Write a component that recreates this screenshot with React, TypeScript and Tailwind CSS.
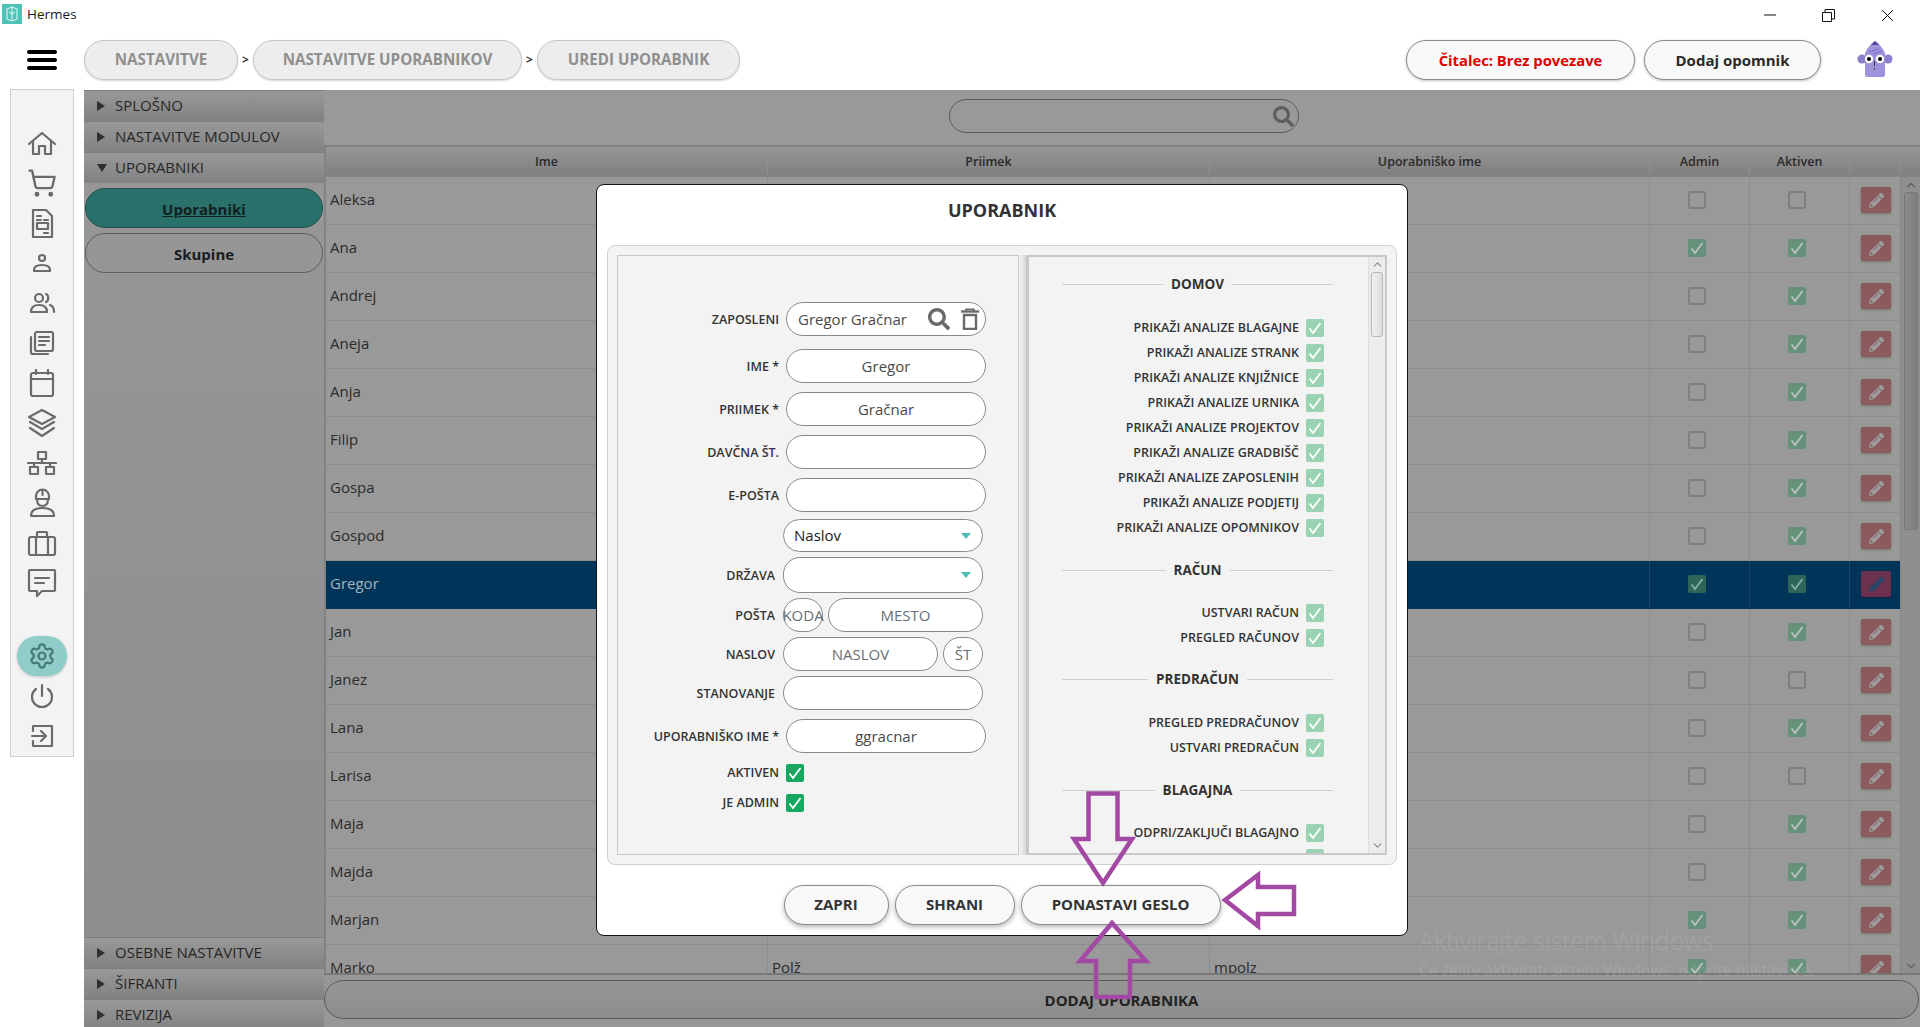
import React from "react";
import { ChevronUp, ChevronDown, ShoppingCart, Settings } from "lucide-react";
import { FaPencilAlt, FaSearch } from "react-icons/fa";

const S = { fontFamily: '"Open Sans", sans-serif' };

function Ico({ w, h, children }: { w: number; h: number; children: React.ReactNode }) {
  return (
    <svg width={w} height={h} viewBox={`0 0 ${w} ${h}`} fill="none" stroke="#6b6b6b" strokeWidth="2.2" strokeLinejoin="round" strokeLinecap="round">
      {children}
    </svg>
  );
}

const navIcons: React.ReactNode[] = [
  <Ico w={30} h={25} key="home"><path d="M2 13 15 2l13 11" /><path d="M6 10v13h6v-8h6v8h6V10" /></Ico>,
  <ShoppingCart key="cart" size={30} color="#6b6b6b" strokeWidth={1.9} />,
  <Ico w={23} h={31} key="doc"><path d="M2 2h13l6 6v21H2z" /><path d="M6 8h4M6 12h4M13 12h4" /><rect x="6" y="15" width="11" height="6" /><path d="M13 25h4" /></Ico>,
  <Ico w={20} h={20} key="user"><circle cx="10" cy="5" r="3" /><path d="M2 17c0-4 4-5 8-5s8 1 8 5v1H2z" /></Ico>,
  <Ico w={27} h={22} key="users"><circle cx="10" cy="6" r="4" /><path d="M2 20c0-5 3-7 8-7s8 2 8 7z" /><path d="M17 2c3 1 3 7 0 8M21 13c3 1 4 3 4 7" /></Ico>,
  <Ico w={26} h={26} key="news"><rect x="6" y="2" width="18" height="19" rx="2" /><path d="M2 7v15a2 2 0 0 0 2 2h15M10 7h10M10 11h10M10 15h6" /></Ico>,
  <Ico w={26} h={29} key="cal"><rect x="2" y="4" width="22" height="23" rx="2" /><path d="M2 10h22M7 1v4M19 1v4" /></Ico>,
  <Ico w={30} h={30} key="layers"><path d="m15 2 13 7-13 7-13-7z" /><path d="m3 14 12 7 12-7" /><path d="m3 20 12 8 12-8" /></Ico>,
  <Ico w={30} h={26} key="net"><rect x="11" y="2" width="8" height="7" /><rect x="3" y="17" width="8" height="7" /><rect x="19" y="17" width="8" height="7" /><path d="M15 9v4M1 13h28M7 13v4M23 13v4" /></Ico>,
  <Ico w={27} h={30} key="worker"><path d="M7 11V8a6.500 6.500 0 0 1 13 0v3z" /><path d="M13.500 2v5M8 11c0 5 2 7 5.500 7S19 16 19 11" /><path d="M2 28c0-6 5-8 11.500-8S25 22 25 28z" /></Ico>,
  <Ico w={30} h={27} key="case"><rect x="2" y="7" width="26" height="18" rx="2" /><path d="M10 7V3a1 1 0 0 1 1-1h8a1 1 0 0 1 1 1v4M9 7v18M21 7v18" /></Ico>,
  <Ico w={30} h={30} key="msg"><path d="M3 2h24a1 1 0 0 1 1 1v19a1 1 0 0 1-1 1H15l-5 5v-5H3a1 1 0 0 1-1-1V3a1 1 0 0 1 1-1z" /><path d="M8 10h14M8 15h9" /></Ico>,
];

function Check({ color = "#ffffff" }: { color?: string }) {
  return (
    <svg width="14" height="14" viewBox="0 0 14 14" fill="none" stroke={color} strokeWidth="1.8">
      <path d="m1.500 7.500 3.500 4.500 7.500-10" />
    </svg>
  );
}

function Crumb({ w, children }: { w: string; children: React.ReactNode }) {
  return (
    <div className={`flex h-[40px] items-center justify-center rounded-[20px] border border-[#c6c6c6] bg-[#ededed] pb-[2px] text-[15.200px] font-bold text-[#8f8f8f] shadow-[0_1px_2px_rgba(0,0,0,0.15)] ${w}`}>
      {children}
    </div>
  );
}

function Sep() {
  return <div className="w-[15px] text-center text-[12px] font-bold text-[#333]">&gt;</div>;
}

function AccHead({ open, children }: { open?: boolean; children: React.ReactNode }) {
  return (
    <div className="flex h-[31px] shrink-0 items-center border-t border-b border-t-[#7d7d7d] border-b-[#858585] bg-linear-to-b from-[#999999] to-[#828282] pl-[13px] text-[15px] text-[#262626]">
      {open ? (
        <span className="mr-[8px] h-0 w-0 border-x-[5px] border-t-[8px] border-x-transparent border-t-[#2f2f2f]" />
      ) : (
        <span className="mr-[10px] h-0 w-0 border-y-[5px] border-l-[8px] border-y-transparent border-l-[#2f2f2f]" />
      )}
      {children}
    </div>
  );
}

type R = { n: string; a: boolean; k: boolean; p?: string; u?: string };
const rows: R[] = [
  { n: "Aleksa", a: false, k: false },
  { n: "Ana", a: true, k: true },
  { n: "Andrej", a: false, k: true },
  { n: "Aneja", a: false, k: true },
  { n: "Anja", a: false, k: true },
  { n: "Filip", a: false, k: true },
  { n: "Gospa", a: false, k: true },
  { n: "Gospod", a: false, k: true },
  { n: "Gregor", a: true, k: true },
  { n: "Jan", a: false, k: true },
  { n: "Janez", a: false, k: false },
  { n: "Lana", a: false, k: true },
  { n: "Larisa", a: false, k: false },
  { n: "Maja", a: false, k: true },
  { n: "Majda", a: false, k: true },
  { n: "Marjan", a: true, k: true },
  { n: "Marko", a: true, k: true, p: "Polž", u: "mpolz" },
];

function TableCheck({ on, sel }: { on: boolean; sel: boolean }) {
  if (on) {
    return (
      <div className={`flex h-[18px] w-[18px] items-center justify-center rounded-[2px] ${sel ? "bg-[#2d6659]" : "bg-[#66917b]"}`}>
        <Check color={sel ? "#86aca6" : "#bcc4c0"} />
      </div>
    );
  }
  return <div className="h-[18px] w-[18px] rounded-[3px] border-2 border-[#7f7f7f]" />;
}

function Row({ r }: { r: R }) {
  const sel = r.n === "Gregor";
  const line = sel ? "border-[#1a4468]" : "border-[#8d8d8d]";
  return (
    <div className={`flex h-[48px] shrink-0 border-b ${sel ? "border-b-[#003459] bg-[#003459] text-[#a9b4bc]" : "border-b-[#8d8d8d] text-[#2b2b2b]"} text-[15px]`}>
      <div className={`flex w-[442px] items-center border-r pb-[2px] pl-[4px] ${line}`}>{r.n}</div>
      <div className={`flex w-[442px] items-center border-r pb-[2px] pl-[4px] ${line}`}>{r.p}</div>
      <div className={`flex w-[440px] items-center border-r pb-[2px] pl-[4px] ${line}`}>{r.u}</div>
      <div className={`w-[100px] border-r pl-[38px] pt-[14px] ${line}`}>
        <TableCheck on={r.a} sel={sel} />
      </div>
      <div className={`w-[100px] border-r pl-[38px] pt-[14px] ${line}`}>
        <TableCheck on={r.k} sel={sel} />
      </div>
      <div className="w-[50px] pl-[11px] pt-[10px]">
        <div className={`flex h-[26px] w-[30px] items-center justify-center rounded-[2px] shadow-[0_1px_3px_rgba(0,0,0,0.25)] ${sel ? "bg-[#6d3150]" : "bg-[#8c5a5c]"}`}>
          <FaPencilAlt size={15} color={sel ? "#1f4a70" : "#a0a0a0"} />
        </div>
      </div>
    </div>
  );
}

function Field({ children, center, className = "" }: { children?: React.ReactNode; center?: boolean; className?: string }) {
  return (
    <div className={`flex items-center rounded-[17px] border border-[#8a8a8a] bg-white text-[15px] text-[#4a4a4a] ${center ? "justify-center" : ""} ${className}`}>
      {children}
    </div>
  );
}

function Caret() {
  return <span className="absolute right-[11px] top-1/2 h-0 w-0 -translate-y-1/2 border-x-[5px] border-t-[6px] border-x-transparent border-t-[#4cbfb5]" />;
}

function FormGroupA({ label, top, flat, children }: { label: string; top: string; flat?: boolean; children?: React.ReactNode }) {
  return (
    <div className={`flex items-center ${top}`}>
      <div className={`w-[161px] text-right text-[12.500px] leading-[18px] font-semibold text-[#333] ${flat ? "" : "translate-y-px"}`}>{label}</div>
      <div className="ml-[7px] w-[200px]">{children}</div>
    </div>
  );
}

function FormGroupB({ label, top, children }: { label?: string; top: string; children?: React.ReactNode }) {
  return (
    <div className={`flex items-center ${top}`}>
      <div className="w-[157px] translate-y-px text-right text-[12.500px] leading-[18px] font-semibold text-[#333]">{label}</div>
      <div className="ml-[8px] flex w-[200px] gap-[5px]">{children}</div>
    </div>
  );
}

function Perm({ label }: { label: string }) {
  return (
    <div className="flex h-[18px] w-[295px] shrink-0 items-center justify-end gap-[7px] text-[12.500px] font-semibold text-[#333]">
      <span>{label}</span>
      <div className="flex h-[18px] w-[18px] items-center justify-center rounded-[2px] bg-[#9ad2b4]">
        <Check />
      </div>
    </div>
  );
}

const sections: { t: string; cls: string; items: string[] }[] = [
  {
    t: "DOMOV",
    cls: "mt-[17px] mb-[25px]",
    items: [
      "PRIKAŽI ANALIZE BLAGAJNE",
      "PRIKAŽI ANALIZE STRANK",
      "PRIKAŽI ANALIZE KNJIŽNICE",
      "PRIKAŽI ANALIZE URNIKA",
      "PRIKAŽI ANALIZE PROJEKTOV",
      "PRIKAŽI ANALIZE GRADBIŠČ",
      "PRIKAŽI ANALIZE ZAPOSLENIH",
      "PRIKAŽI ANALIZE PODJETIJ",
      "PRIKAŽI ANALIZE OPOMNIKOV",
    ],
  },
  { t: "RAČUN", cls: "mt-[23px] mb-[24px]", items: ["USTVARI RAČUN", "PREGLED RAČUNOV"] },
  { t: "PREDRAČUN", cls: "mt-[22px] mb-[25px]", items: ["PREGLED PREDRAČUNOV", "USTVARI PREDRAČUN"] },
  { t: "BLAGAJNA", cls: "mt-[23px] mb-[24px]", items: ["ODPRI/ZAKLJUČI BLAGAJNO", ""] },
];

function DlgButton({ w, children }: { w: string; children: React.ReactNode }) {
  return (
    <div className={`flex h-[40px] items-center justify-center rounded-[20px] border border-[#8c8c8c] bg-[#f8f8f8] pb-[1px] text-[15px] font-bold text-[#333] shadow-[0_2px_5px_rgba(0,0,0,0.3)] ${w}`}>
      {children}
    </div>
  );
}

function Dialog() {
  return (
    <div className="absolute left-[596px] top-[184px] flex h-[752px] w-[812px] flex-col rounded-[8px] border border-[#111] bg-white">
      <div className="h-[60px] pt-[14px] text-center text-[18px] leading-[22px] font-bold text-[#333]">UPORABNIK</div>
      <div className="ml-[10px] flex h-[620px] w-[790px] rounded-[8px] border border-[#d0d0d0] bg-[#f3f3f3] p-[9px]">
        <div className="h-full w-[402px] border border-[#c8c8c8] pt-[46px]">
          <FormGroupA label="ZAPOSLENI" top="">
            <Field className="h-[34px] justify-between pl-[11px] pr-[6px]">
              <span>Gregor Gračnar</span>
              <span className="flex items-center gap-[11px]">
                <FaSearch size={22} color="#6a6a6a" />
                <svg width="18" height="22" viewBox="0 0 18 22" fill="none" stroke="#6a6a6a" strokeWidth="2.4">
                  <path d="M0 3.500h18" />
                  <path d="M5 3V1.200h8V3" strokeWidth="1.600" />
                  <path d="M3 7h12v14H3z" />
                </svg>
              </span>
            </Field>
          </FormGroupA>
          <FormGroupA label="IME *" top="mt-[13px]">
            <Field center className="h-[34px]">Gregor</Field>
          </FormGroupA>
          <FormGroupA label="PRIIMEK *" top="mt-[9px]">
            <Field center className="h-[34px]">Gračnar</Field>
          </FormGroupA>
          <FormGroupA label="DAVČNA ŠT." top="mt-[9px]">
            <Field className="h-[34px]" />
          </FormGroupA>
          <FormGroupA label="E-POŠTA" top="mt-[9px]">
            <Field className="h-[34px]" />
          </FormGroupA>
          <FormGroupB top="mt-[7px]">
            <Field className="relative h-[33px] w-full pl-[10px] text-[#222]">
              Naslov
              <Caret />
            </Field>
          </FormGroupB>
          <FormGroupB label="DRŽAVA" top="mt-[5px]">
            <Field className="relative h-[36px] w-full">
              <Caret />
            </Field>
          </FormGroupB>
          <FormGroupB label="POŠTA" top="mt-[5px]">
            <Field center className="h-[34px] w-[40px] shrink-0 text-[#666e74]">KODA</Field>
            <Field center className="h-[34px] w-[155px] text-[#666e74]">MESTO</Field>
          </FormGroupB>
          <FormGroupB label="NASLOV" top="mt-[5px]">
            <Field center className="h-[34px] w-[155px] text-[#666e74]">NASLOV</Field>
            <Field center className="h-[34px] w-[40px] shrink-0 text-[#666e74]">ŠT</Field>
          </FormGroupB>
          <FormGroupB label="STANOVANJE" top="mt-[5px]">
            <Field className="h-[34px] w-full" />
          </FormGroupB>
          <FormGroupA label="UPORABNIŠKO IME *" top="mt-[9px]">
            <Field center className="h-[34px]">ggracnar</Field>
          </FormGroupA>
          <FormGroupA label="AKTIVEN" top="mt-[11px]" flat>
            <div className="flex h-[18px] w-[18px] items-center justify-center rounded-[2px] bg-[#16a860]">
              <Check />
            </div>
          </FormGroupA>
          <FormGroupA label="JE ADMIN" top="mt-[12px]" flat>
            <div className="flex h-[18px] w-[18px] items-center justify-center rounded-[2px] bg-[#16a860]">
              <Check />
            </div>
          </FormGroupA>
        </div>
        <div className="h-full w-[8px] border-r border-[#c8c8c8] bg-linear-to-r from-[#f3f3f3] to-[#d8d8d8]" />
        <div className="flex h-full w-[360px] border-2 border-[#c8c8c8]">
          <div className="h-full flex-1 overflow-hidden">
            {sections.map((s) => (
              <div key={s.t}>
                <div className={`ml-[33px] flex h-[20px] w-[271px] items-center gap-[8px] text-[13.500px] font-bold text-[#333] ${s.cls}`}>
                  <div className="h-px flex-1 bg-[#cfcfcf]" />
                  <span>{s.t}</span>
                  <div className="h-px flex-1 bg-[#cfcfcf]" />
                </div>
                <div className="flex flex-col gap-[7px]">
                  {s.items.map((i, idx) => (
                    <Perm key={idx} label={i} />
                  ))}
                </div>
              </div>
            ))}
          </div>
          <div className="flex h-full w-[17px] flex-col items-center border-l border-[#dedede] bg-[#ececec]">
            <div className="flex h-[15px] items-center"><ChevronUp size={13} color="#8a8a8a" /></div>
            <div className="h-[65px] w-[12px] rounded-[3px] border border-[#b8b8b8] bg-linear-to-r from-[#f2f2f2] to-[#dcdcdc]" />
            <div className="flex-1" />
            <div className="flex h-[15px] items-center"><ChevronDown size={13} color="#8a8a8a" /></div>
          </div>
        </div>
      </div>
      <div className="mt-[20px] flex justify-center gap-[6px]">
        <DlgButton w="w-[105px]">ZAPRI</DlgButton>
        <DlgButton w="w-[120px]">SHRANI</DlgButton>
        <DlgButton w="w-[200px]">PONASTAVI GESLO</DlgButton>
      </div>
    </div>
  );
}

function Mascot() {
  return (
    <svg width="36" height="40" viewBox="0 0 36 40">
      <circle cx="5" cy="19" r="4.600" fill="#8d7fcf" />
      <circle cx="31" cy="19" r="4.600" fill="#8d7fcf" />
      <path d="M8 13q2-5 7-10l3-2 3 2q5 5 7 10v22a2 2 0 0 1-2 2H10a2 2 0 0 1-2-2z" fill="#a091dc" />
      <path d="M14 5 18 1l4 4z" fill="#5a4a9c" />
      <path d="M12 12l10-3M16 14l9-3" stroke="#7d6ec0" strokeWidth="1" />
      <circle cx="12" cy="19" r="4.200" fill="#fff" />
      <circle cx="23" cy="19" r="4.200" fill="#fff" />
      <circle cx="12" cy="19" r="2" fill="#000" />
      <circle cx="23" cy="19" r="2" fill="#000" />
      <path d="M17.500 21v5" stroke="#333" strokeWidth="1" />
      <circle cx="17.500" cy="29" r="0.800" fill="#333" />
    </svg>
  );
}

export default function App() {
  return (
    <div className="relative h-[1027px] w-[1920px] overflow-hidden bg-white text-[#222]" style={S}>
      {/* title bar */}
      <div className="flex h-[30px] items-start">
        <div className="ml-[2px] mt-[4px] flex h-[20px] w-[20px] items-center justify-center bg-[#4fc3b8]">
          <svg width="14" height="16" viewBox="0 0 14 16" fill="none" stroke="#e8fbf8" strokeWidth="1">
            <path d="M7 1 2 3v10l5 2 5-2V3zM7 1v14M4 6l3 2 3-2" />
          </svg>
        </div>
        <div className="ml-[5px] mt-[4px] text-[13.500px] leading-[20px] text-[#1a1a1a]">Hermes</div>
        <div className="ml-auto flex h-[30px] items-center">
          <svg width="12" height="2" className="mr-[46px]"><path d="M0 1h12" stroke="#111" strokeWidth="1" /></svg>
          <svg width="13" height="13" className="mr-[46px]" fill="none" stroke="#111" strokeWidth="1">
            <path d="M.5 3.500h9v9h-9zM3 3.500V.500h9.500V10H9.500" />
          </svg>
          <svg width="13" height="13" className="mr-[26px]" fill="none" stroke="#111" strokeWidth="1">
            <path d="M1 1l11 11M12 1 1 12" />
          </svg>
        </div>
      </div>

      {/* header */}
      <div className="flex h-[60px] items-center">
        <div className="flex w-[84px] justify-center">
          <div className="flex h-[20px] w-[30px] flex-col justify-between">
            <div className="h-[4px] rounded-full bg-black" />
            <div className="h-[4px] rounded-full bg-black" />
            <div className="h-[4px] rounded-full bg-black" />
          </div>
        </div>
        <Crumb w="w-[154px]">NASTAVITVE</Crumb>
        <Sep />
        <Crumb w="w-[269px]">NASTAVITVE UPORABNIKOV</Crumb>
        <Sep />
        <Crumb w="w-[203px]">UREDI UPORABNIK</Crumb>
        <div className="ml-auto flex items-center">
          <div className="flex h-[40px] w-[229px] items-center justify-center rounded-[20px] border border-[#8a8a8a] bg-[#f8f8f8] text-[14.800px] font-bold text-[#e00000] shadow-[0_1px_3px_rgba(0,0,0,0.25)]">
            Čitalec: Brez povezave
          </div>
          <div className="ml-[9px] flex h-[40px] w-[177px] items-center justify-center rounded-[20px] border border-[#8a8a8a] bg-[#f8f8f8] text-[15px] font-bold text-[#2a2a2a] shadow-[0_1px_3px_rgba(0,0,0,0.25)]">
            Dodaj opomnik
          </div>
          <div className="ml-[36px] mr-[27px]"><Mascot /></div>
        </div>
      </div>

      {/* body */}
      <div className="flex h-[937px]">
        <div className="w-[84px] pl-[10px]">
          <div className="-mt-px flex h-[668px] w-[64px] flex-col items-center border border-[#cfcfcf] bg-[#f3f3f3] pt-[33px]">
            {navIcons.map((ic, i) => (
              <div key={i} className="flex h-[40px] w-full items-center justify-center">{ic}</div>
            ))}
            <div className="mt-[33px] flex h-[40px] w-[50px] items-center justify-center rounded-full bg-[#8fcdc8] shadow-[0_1px_3px_rgba(0,0,0,0.2)]">
              <Settings size={28} color="#47787a" strokeWidth={1.9} />
            </div>
            <div className="flex h-[40px] items-center justify-center">
              <Ico w={24} h={26}><path d="M12 2v11" /><path d="M6 6a10 10 0 1 0 12 0" /></Ico>
            </div>
            <div className="flex h-[40px] items-center justify-center">
              <Ico w={24} h={24}><path d="M3 7V2h19v20H3v-5" /><path d="M2 12h13M11 7l5 5-5 5" /></Ico>
            </div>
          </div>
        </div>

        {/* accordion */}
        <div className="flex h-[940px] w-[240px] shrink-0 flex-col bg-linear-to-b from-[#989898] to-[#8c8c8c]">
          <AccHead>SPLOŠNO</AccHead>
          <AccHead>NASTAVITVE MODULOV</AccHead>
          <AccHead open>UPORABNIKI</AccHead>
          <div className="mx-[1px] mt-[5px] flex h-[40px] items-center justify-center rounded-[20px] border border-[#1f4f4b] bg-[#2a706b] pt-[2px] text-[15px] font-bold text-[#12201f] underline">
            Uporabniki
          </div>
          <div className="mx-[1px] mt-[5px] flex h-[40px] items-center justify-center rounded-[20px] border border-[#5f5f5f] pt-[3px] text-[15px] font-bold text-[#1c1c1c]">
            Skupine
          </div>
          <div className="flex-1" />
          <AccHead>OSEBNE NASTAVITVE</AccHead>
          <AccHead>ŠIFRANTI</AccHead>
          <AccHead>REVIZIJA</AccHead>
        </div>

        {/* content */}
        <div className="flex h-full w-[1596px] flex-col bg-[#999999]">
          <div className="flex h-[55px] shrink-0 items-start justify-center pl-[4px] pt-[9px]">
            <div className="flex h-[34px] w-[350px] items-center justify-end rounded-[17px] border border-[#5c5c5c] pr-[4px]">
              <FaSearch size={21} color="#5e5e5e" />
            </div>
          </div>
          <div className="flex h-[828px] shrink-0 flex-col border-l-2 border-t-2 border-[#828282]">
            <div className="flex h-[30px] shrink-0 border-b-2 border-[#858585] bg-linear-to-b from-[#969696] to-[#808080] pt-[2px] text-[12.500px] font-semibold text-[#2a2a2a]">
              <div className="flex w-[442px] items-center justify-center border-r border-[#8f8f8f]">Ime</div>
              <div className="flex w-[442px] items-center justify-center border-r border-[#8f8f8f]">Priimek</div>
              <div className="flex w-[440px] items-center justify-center border-r border-[#8f8f8f]">Uporabniško ime</div>
              <div className="flex w-[100px] items-center justify-center border-r border-[#8f8f8f]">Admin</div>
              <div className="flex w-[100px] items-center justify-center border-r border-[#8f8f8f]">Aktiven</div>
              <div className="w-[50px] border-r border-[#8f8f8f]" />
              <div className="flex-1" />
            </div>
            <div className="flex min-h-0 flex-1">
              <div className="h-full w-[1574px] overflow-hidden">
                {rows.map((r) => (
                  <Row key={r.n} r={r} />
                ))}
              </div>
              <div className="flex h-full flex-1 flex-col items-center border-l border-[#868686] bg-[#8f8f8f]">
                <div className="flex h-[15px] items-center"><ChevronUp size={14} color="#5e5e5e" /></div>
                <div className="h-[338px] w-[14px] rounded-[3px] border border-[#767676] bg-linear-to-r from-[#8c8c8c] to-[#7e7e7e]" />
                <div className="flex-1" />
                <div className="flex h-[15px] items-center"><ChevronDown size={14} color="#5e5e5e" /></div>
              </div>
            </div>
          </div>
          <div className="flex flex-1 flex-col border-t-2 border-[#787878] bg-[#979797] pr-px pt-[5px]">
            <div className="flex h-[39px] items-center justify-center rounded-[20px] border border-[#5a5a5a] bg-linear-to-b from-[#969696] to-[#8c8c8c] pt-[2px] text-[15px] font-bold text-[#222]">
              DODAJ UPORABNIKA
            </div>
          </div>
        </div>
      </div>

      <Dialog />

      {/* annotation arrows drawn over the screenshot */}
      <svg className="pointer-events-none absolute left-0 top-0" width="1920" height="1027" fill="none" stroke="#a349a4" strokeWidth="4.500" strokeLinejoin="miter">
        <path d="M1088.500 793.500h29v45.500h14.500l-29 44-29-44h14.500z" />
        <path d="M1225 900 1258 875v12h36v27h-36v12z" />
        <path d="M1112 923 1146 961h-16v36h-34v-36h-16z" />
      </svg>

      {/* system watermark */}
      <div className="pointer-events-none absolute left-[1419px] top-[923px] text-white/10">
        <div className="text-[24.800px] leading-[34px] font-light">Aktivirajte sistem Windows</div>
        <div className="mt-[1px] text-[15.700px] leading-[24px]">Če želite aktivirati sistem Windows, odprite nastavitve.</div>
      </div>
    </div>
  );
}
